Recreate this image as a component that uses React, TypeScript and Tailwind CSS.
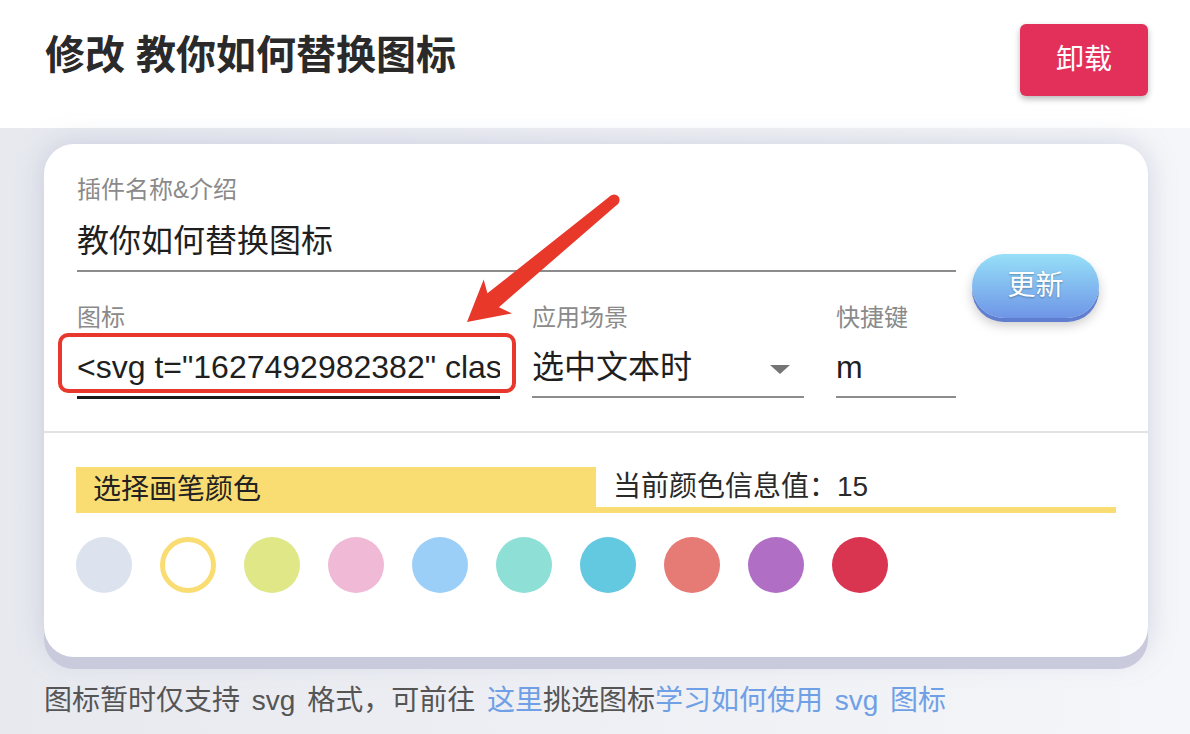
import React from "react";

const font = { fontFamily: '"Liberation Sans", "Noto Sans CJK SC", sans-serif' };

const colors = [
  "bg-[#dce3ee]",
  "ring",
  "bg-[#dfe787]",
  "bg-[#f0b9d6]",
  "bg-[#9ccff7]",
  "bg-[#8edfd5]",
  "bg-[#62c9e0]",
  "bg-[#e67a74]",
  "bg-[#b06fc4]",
  "bg-[#d93450]",
];

export default function App() {
  return (
    <div
      style={font}
      className="relative w-[1190px] min-h-[734px] overflow-hidden bg-gradient-to-r from-[#e7e9ef] to-[#f5f6f9]"
    >
      {/* Header */}
      <div className="flex h-[128px] items-start justify-between bg-white pl-[45px] pr-[42px] pt-[24px]">
        <h1 className="mt-[6px] text-[40px] font-bold leading-[50px] text-[#2a2a2a]">
          修改 教你如何替换图标
        </h1>
        <button className="flex h-[72px] w-[128px] items-center justify-center rounded-[6px] bg-[#e3305a] text-[28px] text-white shadow-[0_3px_6px_rgba(0,0,0,0.28)]">
          卸载
        </button>
      </div>

      {/* Body */}
      <div className="px-[42px] pt-[16px] pl-[44px]">
        <div className="rounded-[30px] bg-white shadow-[0_12px_0_#c9cbdc,0_0_28px_rgba(140,150,185,0.35)]">
          {/* Form */}
          <div className="flex pl-[33px] pt-[30px]">
            <div className="flex w-[879px] flex-col">
              {/* Row 1 */}
              <div className="flex flex-col border-b-2 border-[#8c8c8c]">
                <div className="text-[24px] leading-[32px] text-[#8a8a8a]">插件名称&amp;介绍</div>
                <div className="pb-[9px] pt-[15px] text-[32px] leading-[40px] text-[#1f1f1f]">
                  教你如何替换图标
                </div>
              </div>
              {/* Row 2 */}
              <div className="mt-[30px] flex gap-[32px]">
                <div className="relative flex w-[423px] flex-col">
                  <div className="text-[24px] leading-[32px] text-[#8a8a8a]">图标</div>
                  <div className="overflow-hidden whitespace-nowrap border-b-[3px] border-[#1a1a1a] pb-[9px] pt-[13px] text-[32px] leading-[40px] text-[#1f1f1f]">
                    {'<svg t="1627492982382" class'}
                  </div>
                  <div className="pointer-events-none absolute left-[-19px] top-[31px] h-[60px] w-[458px] rounded-[10px] border-[4px] border-[#e8382d]" />
                </div>
                <div className="flex w-[272px] flex-col">
                  <div className="text-[24px] leading-[32px] text-[#8a8a8a]">应用场景</div>
                  <div className="flex items-center justify-between border-b-2 border-[#8c8c8c] pb-[9px] pr-[14px] pt-[13px]">
                    <span className="text-[32px] leading-[40px] text-[#1f1f1f]">选中文本时</span>
                    <span className="mt-[4px] h-0 w-0 border-x-[10px] border-t-[9px] border-x-transparent border-t-[#757575]" />
                  </div>
                </div>
                <div className="flex w-[120px] flex-col">
                  <div className="text-[24px] leading-[32px] text-[#8a8a8a]">快捷键</div>
                  <div className="border-b-2 border-[#8c8c8c] pb-[9px] pt-[13px] text-[32px] leading-[40px] text-[#1f1f1f]">
                    m
                  </div>
                </div>
              </div>
            </div>
            <div className="ml-[16px] mt-[80px]">
              <button className="flex h-[64px] w-[127px] items-center justify-center rounded-full bg-gradient-to-b from-[#97e0f8] to-[#6f95e6] text-[28px] text-white shadow-[0_4px_0_#5f7ecf,0_7px_12px_rgba(0,0,0,0.22)] [text-shadow:0_1px_2px_rgba(0,0,0,0.3)]">
                更新
              </button>
            </div>
          </div>

          {/* Divider */}
          <div className="mt-[32px] h-[2px] bg-[#e2e2e2]" />

          {/* Color section */}
          <div className="pb-[64px] pl-[32px] pr-[32px] pt-[34px]">
            <div className="flex h-[46px]">
              <div className="flex w-[520px] items-center bg-[#f9dd73] pl-[17px] text-[28px] text-[#222]">
                选择画笔颜色
              </div>
              <div className="flex flex-1 items-center border-b-[6px] border-[#f9dd73] pl-[17px] text-[28px] text-[#2a2a2a]">
                当前颜色信息值：15
              </div>
            </div>
            <div className="mt-[24px] flex gap-[28px]">
              {colors.map((c, i) =>
                c === "ring" ? (
                  <div key={i} className="h-[56px] w-[56px] rounded-full border-[5px] border-[#f9dd73] bg-white" />
                ) : (
                  <div key={i} className={`h-[56px] w-[56px] rounded-full ${c}`} />
                )
              )}
            </div>
          </div>
        </div>

        {/* Footer */}
        <div className="mt-[24px] text-[28px] leading-[40px] text-[#555] [word-spacing:4px]">
          图标暂时仅支持 svg 格式，可前往 <span className="text-[#6fa0e6]">这里</span>挑选图标
          <span className="text-[#6fa0e6]">学习如何使用 svg 图标</span>
        </div>
      </div>

      {/* Arrow annotation */}
      <svg
        className="pointer-events-none absolute left-0 top-0"
        width="1190"
        height="734"
        viewBox="0 0 1190 734"
      >
        <polygon
          fill="#e8382a"
          points="610.6,195.8 487.4,293.3 483.7,279.5 467,322 511.9,313.4 498.9,307.2 617.6,204.2"
        />
        <circle cx="614.1" cy="200" r="5.5" fill="#e8382a" />
      </svg>
    </div>
  );
}
